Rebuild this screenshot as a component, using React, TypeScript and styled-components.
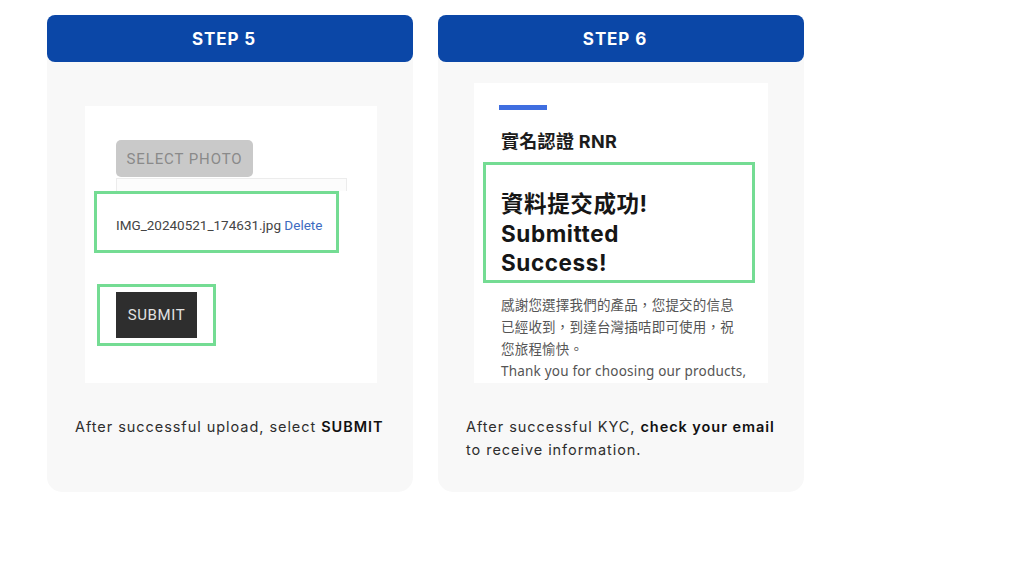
import styled, { createGlobalStyle } from "styled-components";

const Global = createGlobalStyle`
  html, body {
    margin: 0;
    padding: 0;
    background: #ffffff;
  }
  body {
    font-family: Inter, "Noto Sans", sans-serif;
  }
`;

function App() {
  return (
    <>
      <Global />
      <Pagina>
        <Cartao>
          <Cabecalho>STEP 5</Cabecalho>
          <Corpo>
            <Captura $mt={44} $ml={10} $w={292} $h={277}>
              <UploadTela>
                <BotaoFoto>SELECT PHOTO</BotaoFoto>
                <CampoArquivo />
                <Destaque $w={245} $h={62} $pl={19} $pt={6}>
                  <NomeArquivo>
                    IMG_20240521_174631.jpg <LinkApagar>Delete</LinkApagar>
                  </NomeArquivo>
                </Destaque>
                <Destaque $w={119} $h={62} $pl={16} $mt={31} $ml={3}>
                  <BotaoEnviar>SUBMIT</BotaoEnviar>
                </Destaque>
              </UploadTela>
            </Captura>
            <Legenda>
              After successful upload, select <strong>SUBMIT</strong>
            </Legenda>
          </Corpo>
        </Cartao>

        <Cartao>
          <Cabecalho>STEP 6</Cabecalho>
          <Corpo>
            <Captura $mt={21} $ml={8} $w={294} $h={300}>
              <SucessoTela>
                <BarraAzul />
                <TituloRnr>實名認證 RNR</TituloRnr>
                <Destaque $w={272} $h={121} $pl={15}>
                  <Sucesso>
                    資料提交成功!
                    <br />
                    Submitted
                    <br />
                    Success!
                  </Sucesso>
                </Destaque>
                <Agradecimento>
                  感謝您選擇我們的產品，您提交的信息
                  <br />
                  已經收到，到達台灣插咭即可使用，祝
                  <br />
                  您旅程愉快。
                  <br />
                  Thank you for choosing our products,
                </Agradecimento>
              </SucessoTela>
            </Captura>
            <Legenda>
              After successful KYC, <strong>check your email</strong>
              <br />
              to receive information.
            </Legenda>
          </Corpo>
        </Cartao>
      </Pagina>
    </>
  );
}

const Pagina = styled.main`
  display: flex;
  gap: 25px;
  padding: 15px 0 0 47px;
`;

const Cartao = styled.section`
  width: 366px;
  height: 477px;
  display: flex;
  flex-direction: column;
  background: #f8f8f8;
  border-radius: 9px 9px 15px 15px;
`;

const Cabecalho = styled.header`
  height: 47px;
  flex-shrink: 0;
  display: flex;
  align-items: center;
  justify-content: center;
  padding-right: 12px;
  background: #0b47a7;
  border-radius: 8px;
  color: #ffffff;
  font-family: Inter, sans-serif;
  font-weight: 700;
  font-size: 17px;
  letter-spacing: 0.9px;
`;

const Corpo = styled.div`
  display: flex;
  flex-direction: column;
  padding: 0 28px;
`;

const Captura = styled.div<{ $mt: number; $ml: number; $w: number; $h: number }>`
  margin-top: ${(p) => p.$mt}px;
  margin-left: ${(p) => p.$ml}px;
  width: ${(p) => p.$w}px;
  height: ${(p) => p.$h}px;
  background: #ffffff;
  overflow: hidden;
  flex-shrink: 0;
`;

const UploadTela = styled.div`
  display: flex;
  flex-direction: column;
  align-items: flex-start;
  padding: 34px 0 0 9px;
`;

const BotaoFoto = styled.div`
  margin-left: 22px;
  width: 137px;
  height: 37px;
  display: flex;
  align-items: center;
  justify-content: center;
  background: #c9c9c9;
  border-radius: 5px;
  color: #8a8a8a;
  font-family: Roboto, sans-serif;
  font-size: 15px;
  letter-spacing: 0.9px;
`;

const CampoArquivo = styled.div`
  margin-left: 22px;
  margin-top: 1px;
  width: 229px;
  height: 12px;
  border: 1px solid #ececec;
  border-bottom: none;
  background: #fcfcfc;
`;

const Destaque = styled.div<{
  $w: number;
  $h: number;
  $pl: number;
  $pt?: number;
  $mt?: number;
  $ml?: number;
}>`
  box-sizing: border-box;
  width: ${(p) => p.$w}px;
  height: ${(p) => p.$h}px;
  margin-top: ${(p) => p.$mt ?? 0}px;
  margin-left: ${(p) => p.$ml ?? 0}px;
  padding-left: ${(p) => p.$pl}px;
  padding-top: ${(p) => p.$pt ?? 0}px;
  border: 3px solid #74dc93;
  display: flex;
  align-items: center;
  background: #ffffff;
`;

const NomeArquivo = styled.span`
  font-family: Roboto, sans-serif;
  font-size: 13.5px;
  color: #444444;
`;

const LinkApagar = styled.span`
  color: #3d6bbf;
`;

const BotaoEnviar = styled.div`
  width: 81px;
  height: 46px;
  display: flex;
  align-items: center;
  justify-content: center;
  background: #2e2e2e;
  color: #e2e2e2;
  font-family: Roboto, sans-serif;
  font-size: 15px;
  letter-spacing: 0.6px;
`;

const SucessoTela = styled.div`
  display: flex;
  flex-direction: column;
  align-items: flex-start;
  padding: 22px 0 0 9px;
`;

const BarraAzul = styled.div`
  margin-left: 16px;
  width: 48px;
  height: 5px;
  background: #3f6ee0;
`;

const TituloRnr = styled.h2`
  margin: 19px 0 0 18px;
  height: 33px;
  font-family: Inter, "Noto Sans CJK TC", sans-serif;
  font-weight: 700;
  font-size: 18px;
  line-height: 26px;
  letter-spacing: 0.3px;
  color: #1c1c1c;
`;

const Sucesso = styled.div`
  padding-top: 22px;
  font-family: Inter, "Noto Sans CJK TC", sans-serif;
  font-weight: 700;
  font-size: 22.5px;
  line-height: 29.5px;
  letter-spacing: 0.6px;
  color: #161616;
`;

const Agradecimento = styled.p`
  margin: 11px 0 0 18px;
  font-family: "Noto Sans", "Noto Sans CJK TC", sans-serif;
  font-size: 13.5px;
  line-height: 22px;
  color: #555555;
  white-space: nowrap;
  letter-spacing: 0.2px;
`;

const Legenda = styled.p`
  margin: 32px 0 0 0;
  font-family: Inter, sans-serif;
  font-size: 14.5px;
  line-height: 23px;
  letter-spacing: 0.95px;
  color: #2e2e2e;
  white-space: nowrap;
  strong {
    font-weight: 600;
    color: #111111;
  }
`;

export default App;
